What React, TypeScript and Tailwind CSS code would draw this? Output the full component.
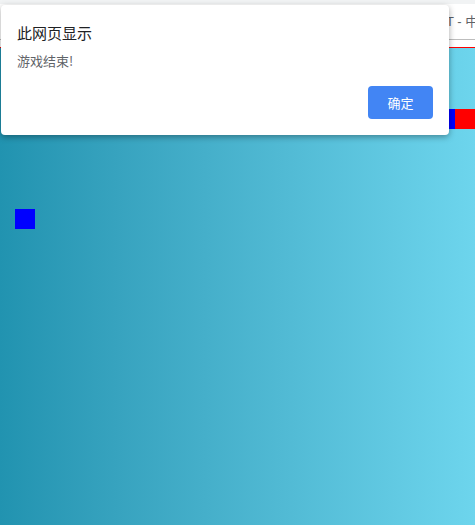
const cjk = { fontFamily: '"Noto Sans CJK SC", "Noto Sans", sans-serif' };

export default function App() {
  return (
    <div className="relative flex h-[525px] w-[475px] flex-col overflow-hidden bg-white" style={cjk}>
      {/* browser strip */}
      <div className="h-[4px] bg-[#f1f3f4]" />
      {/* page header */}
      <div className="flex h-[36px] items-center overflow-hidden border-b border-[#bdbdbd] pl-[446px] text-[13px] text-[#5f6368]">
        <span className="whitespace-nowrap" style={{ fontFamily: '"Liberation Sans", "Noto Sans CJK SC", sans-serif' }}>
          T - 中文网
        </span>
      </div>
      <div className="h-[8px] border-b border-[#ff0000]" />
      {/* game area */}
      <div className="relative flex-1 bg-gradient-to-r from-[#2193b0] to-[#6dd5ed]">
        <div className="absolute left-[15px] top-[161px] h-[20px] w-[20px] bg-[#0000ff]" />
        <div className="absolute left-[435px] top-[61px] h-[20px] w-[20px] bg-[#0000ff]" />
        <div className="absolute left-[455px] top-[61px] h-[20px] w-[20px] bg-[#ff0000]" />
      </div>

      {/* alert dialog */}
      <div className="absolute left-[1px] top-[5px] flex h-[130px] w-[448px] flex-col rounded-[4px] bg-white px-[16px] shadow-[0_2px_6px_rgba(0,0,0,0.35)]">
        <div className="pt-[18px] text-[15px] leading-[20px] text-[#202124]">此网页显示</div>
        <div className="pt-[9px] text-[13px] leading-[18px] text-[#5f6368]">游戏结束!</div>
        <div className="flex justify-end pt-[16px]">
          <button className="h-[33px] w-[65px] rounded-[4px] bg-[#4285f4] text-[13px] text-white">
            确定
          </button>
        </div>
      </div>
    </div>
  );
}
